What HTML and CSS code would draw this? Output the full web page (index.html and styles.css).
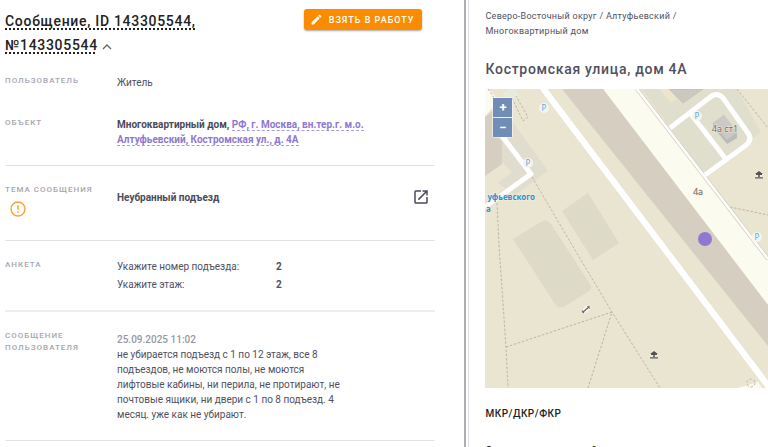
FILE: index.html
```html
<!DOCTYPE html>
<html lang="ru">
<head>
<meta charset="utf-8">
<meta name="viewport" content="width=device-width, initial-scale=1">
<title>Сообщение 143305544</title>
<link rel="stylesheet" href="styles.css">
</head>
<body>
<div class="layout">
  <main class="message">
    <header class="message-header">
      <h1 class="message-title"><span class="dotted">Сообщение, ID 143305544, №143305544</span>
        <button class="icon-button" type="button" aria-label="Свернуть"><svg width="10" height="6" viewBox="0 0 10 6"><path d="M1 5 5 1l4 4" fill="none" stroke="#666" stroke-width="1.3"/></svg></button></h1>
      <button class="take-button" type="button">
        <svg width="13" height="13" viewBox="0 0 24 24"><path d="M3 17.2V21h3.8L17.8 9.9l-3.7-3.7zM20.7 7a1 1 0 0 0 0-1.4l-2.3-2.3a1 1 0 0 0-1.4 0l-1.9 1.800 3.8 3.8z" fill="#fff"/></svg>
        Взять в работу
      </button>
    </header>

    <section class="row row-user">
      <h2 class="label">Пользователь</h2>
      <p class="value">Житель</p>
    </section>
    <section class="row row-ruled">
      <h2 class="label">Объект</h2>
      <p class="value strong">Многоквартирный дом, <a class="address" href="#">РФ, г. Москва, вн.тер.г. м.о. Алтуфьевский, Костромская ул., д. 4А</a></p>
    </section>
    <section class="row row-ruled">
      <div>
        <h2 class="label">Тема сообщения</h2>
        <svg class="warning" width="16" height="16" viewBox="0 0 16 16"><circle cx="8" cy="8" r="7" fill="none" stroke="#ffa02e" stroke-width="1.4"/><path d="M8 4.2v4.6M8 10.2v1.6" stroke="#ffa02e" stroke-width="1.5"/></svg>
      </div>
      <div class="topic">
        <p class="value strong">Неубранный подъезд</p>
        <button class="icon-button" type="button" aria-label="Открыть"><svg width="18" height="18" viewBox="0 0 24 24"><path d="M19 19H5V5h7V3H5a2 2 0 0 0-2 2v14a2 2 0 0 0 2 2h14a2 2 0 0 0 2-2v-7h-2zM14 3v2h3.6l-9.8 9.8 1.4 1.4L19 6.400V10h2V3z" fill="#4a4a5e"/></svg></button>
      </div>
    </section>
    <section class="row row-ruled row-thick">
      <h2 class="label">Анкета</h2>
      <dl class="form">
        <dt>Укажите номер подъезда:</dt><dd>2</dd>
        <dt>Укажите этаж:</dt><dd>2</dd>
      </dl>
    </section>
    <section class="row row-ruled">
      <h2 class="label">Сообщение пользователя</h2>
      <div class="body-text">
        <time class="date" datetime="2025-09-25T11:02">25.09.2025 11:02</time>
        <p>не убирается подъезд с 1 по 12 этаж, все 8 подъездов, не моются полы, не моются лифтовые кабины, ни перила, не протирают, не почтовые ящики, ни двери с 1 по 8 подъезд. 4 месяц. уже как не убирают.</p>
      </div>
    </section>
  </main>

  <aside class="object">
    <nav class="crumbs">Северо-Восточный округ / Алтуфьевский / Многоквартирный дом</nav>
    <h2 class="object-title">Костромская улица, дом 4А</h2>
    <div class="map">
      <svg class="map-canvas" viewBox="0 0 283 299" preserveAspectRatio="xMinYMin slice">
        <defs>
          <g id="parking"><circle r="5" fill="#f5f4ee"/><text y="3" text-anchor="middle" class="map-parking">P</text></g>
          <g id="shelter"><path d="M-4-1 0-4 4-1zM-4 3.500h8V2.300H-4zM-.8-1H.8v3H-.8zM-3-1h6v1h-6z" fill="#55534f" stroke="#f8f6ee" stroke-width="1" paint-order="stroke"/></g>
        </defs>
        <rect width="283" height="299" fill="#eae5d1"/>
        <!-- buildings and plots -->
        <path d="M118 0h34l131 170v46z" fill="#fbfbf0"/>
        <path d="M77 0h41l165 216v41z" fill="#d5cec1"/>
        <path d="M157 0h95l24 43-57 43z" fill="#e0dfcd"/>
        <path d="M0 0h4l9 11L0 28z" fill="#fbfbf0"/>
        <path d="M0 28 10 20l7 25v30L0 87z" fill="#d5cec1"/>
        <path d="M17 32h10l36 50-33 24-17-12 14-11-10-10z" fill="#e0ddcf"/>
        <path d="M18 4 25 0h5l5 8-8 7-9-6z" fill="#e8eadb"/>
        <path d="m28 150 28-17q6-4 10 2l39 60q3 5-2 8l-23 14q-6 4-10-2zM77 122l26-18 31 50-26 17z" fill="#dddac7"/>
        <path d="M174 0h10l8 10-6 4z" fill="#ece5c9"/>
        <path d="m184 0 14 14 20-14z" fill="#cbc8c0" stroke="#bab7b1" stroke-width=".5"/>
        <path d="m253 299 20-6 4 6z" fill="#fbfbf0"/>
        <!-- footpaths -->
        <g fill="none" stroke="#bdb5a3" stroke-width="1" stroke-dasharray="2.500 1.700">
          <path d="M47 88 87 156l40 67 48 76M12 114l2 42 7 102 2 41M21 258l106-35-24 76M245 118l38 8M3 0l7 10M27 9l11 23 5-4L31 7M252 0l31 39"/>
          <circle cx="266" cy="294" r="4"/>
        </g>
        <!-- roads -->
        <g fill="none" stroke-linejoin="round" stroke="#d4d0c3">
          <path d="m152 0 131 170" stroke-width="4"/>
          <path d="m152 0 131 170" stroke="#fff" stroke-width="2.500"/>
          <path d="m185 39 39-30q8-7 14 0l25 35q5 7-3 13l-40 29M206 25l34 44" stroke-width="5.600" stroke="#e1ddd1"/>
          <path d="M57-2 284 298M17 47l29 38L0 118" stroke-width="7" stroke="#e1ddd1"/>
          <path d="m185 39 39-30q8-7 14 0l25 35q5 7-3 13l-40 29M206 25l34 44" stroke="#fff" stroke-width="5"/>
          <path d="M57-2 284 298" stroke="#fff" stroke-width="6.400"/>
          <path d="M17 47l29 38L0 118" stroke="#fff" stroke-width="5"/>
        </g>
        <path d="m228 34 11-8 13 17v6l-10 6-14-17z" fill="#bdbab7"/>
        <path d="m228 34 11-8 13 17-10 8z" fill="#cbc9c6"/>
        <use href="#parking" x="59" y="19"/><use href="#parking" x="43" y="74"/>
        <use href="#parking" x="212" y="27"/><use href="#parking" x="272" y="148"/>
        <use href="#shelter" x="274" y="86"/><use href="#shelter" x="169" y="266"/>
        <path d="m98 223 6-5" stroke="#f8f6ee" stroke-width="5"/>
        <path d="m97.500 223.500 7-6M97 221.500l2 2.500M102.500 217l2 2.500" stroke="#66645f" stroke-width="1.200"/>
        <g class="map-house" text-anchor="middle"><text x="213" y="106">4а</text><text x="240" y="43">4а ст1</text></g>
        <g class="map-stop"><text x="50" y="111" text-anchor="end">уфьевского</text><text x="1" y="123">а</text></g>
        <circle cx="220" cy="150" r="7" fill="#8f78cf"/>
      </svg>
      <div class="zoom">
        <button type="button" aria-label="Приблизить">+</button>
        <button type="button" aria-label="Отдалить">−</button>
      </div>
    </div>
    <h3 class="subhead">МКР/ДКР/ФКР</h3>
    <h3 class="subhead">Социально значимый</h3>
  </aside>
</div>
</body>
</html>
```
FILE: styles.css
```css
* { box-sizing: border-box; }
body {
  margin: 0;
  background: #fff;
  color: #50505f;
  font: 10px/15px Roboto, sans-serif;
}
h1, h2, h3, p, dl, dd { margin: 0; }
button { border: 0; font-family: inherit; cursor: pointer; }

.layout {
  display: grid;
  grid-template-columns: 61fr 39fr;
  height: 100vh;
  overflow: hidden;
}
.message {
  padding: 9px 29px 0 5px;
  border-right: 2px solid #adafb7;
  margin-right: 2px;
}
.message-header {
  display: flex;
  justify-content: space-between;
  align-items: flex-start;
  padding-right: 13px;
}
.message-title {
  flex: 0 1 220px;
  color: #222;
  font-size: 14px;
  font-weight: 500;
  line-height: 24px;
  letter-spacing: 0.05em;
}
.dotted {
  text-decoration: underline dotted 2px;
  text-underline-offset: 2px;
  text-decoration-skip-ink: none;
}
.icon-button { padding: 0; background: none; line-height: 0; }
.take-button {
  display: flex;
  align-items: center;
  gap: 6px;
  padding: 0 8px 0 6px;
  height: 21px;
  border-radius: 3px;
  background: #fb8c00;
  box-shadow: 0 1px 2px rgba(0, 0, 0, 0.35);
  color: #fff;
  font-size: 9px;
  font-weight: 500;
  letter-spacing: 1px;
  text-transform: uppercase;
  white-space: nowrap;
}

.row {
  display: grid;
  grid-template-columns: 112px 1fr;
  padding: 18px 0;
}
.row-user { padding-bottom: 9px; }
.row-ruled { border-bottom: 1px solid #e2e2e4; }
.row-thick { border-bottom: 2px solid #eeeeef; }
.label {
  color: #a5a6ad;
  font-size: 8px;
  font-weight: 500;
  line-height: 12px;
  letter-spacing: 1px;
  text-transform: uppercase;
}
.strong { font-weight: 700; color: #4a4a5a; }
.address {
  border-bottom: 1px dashed #a99ae0;
  color: #8d78d0;
  text-decoration: none;
}
.value { max-width: 260px; }
.warning { display: block; margin: 5px 0 5px 5px; }
.topic {
  display: flex;
  justify-content: space-between;
  align-items: center;
  padding: 0 5px 12px 0;
}
.form {
  display: grid;
  grid-template-columns: 159px 1fr;
  gap: 3px 0;
}
.form dd { font-weight: 700; }
.body-text { max-width: 230px; }
.date {
  display: block;
  padding-top: 2px;
  color: #96979f;
  font-weight: 500;
}

.object {
  padding: 9px 0 0 16px;
  border-left: 1px solid #e2e2e4;
  overflow: hidden;
}
.crumbs {
  max-width: 220px;
  font-size: 9px;
  letter-spacing: 0.03em;
}
.object-title {
  margin: 20px 0 10px;
  font-size: 14px;
  font-weight: 500;
  line-height: 20px;
  letter-spacing: 0.05em;
}
.map { position: relative; height: 299px; }
.map-canvas { display: block; width: 100%; height: 100%; }
.map text { font-family: "Noto Sans", sans-serif; }
.map .map-parking { font-size: 8px; fill: #5aa9e0; }
.map-house { font-size: 9px; fill: #706d68; stroke: #f0eee4; stroke-width: 1px; paint-order: stroke; }
.map-stop { font-size: 8px; font-weight: 700; fill: #2f8fc9; stroke: #f5f3ea; stroke-width: 1px; paint-order: stroke; }
.zoom {
  position: absolute;
  top: 8px;
  left: 7px;
  display: grid;
  gap: 1px;
  padding: 1px;
  border-radius: 2px;
  background: rgba(255, 255, 255, 0.5);
}
.zoom button {
  width: 19px;
  height: 19px;
  padding: 0;
  background: #6f8db6;
  color: #fff;
  font-size: 13px;
  font-weight: 700;
  line-height: 19px;
}
.subhead {
  margin: 18px 0 22px;
  color: #222;
  font-size: 10px;
  font-weight: 500;
  line-height: 15px;
  letter-spacing: 0.05em;
}
```
